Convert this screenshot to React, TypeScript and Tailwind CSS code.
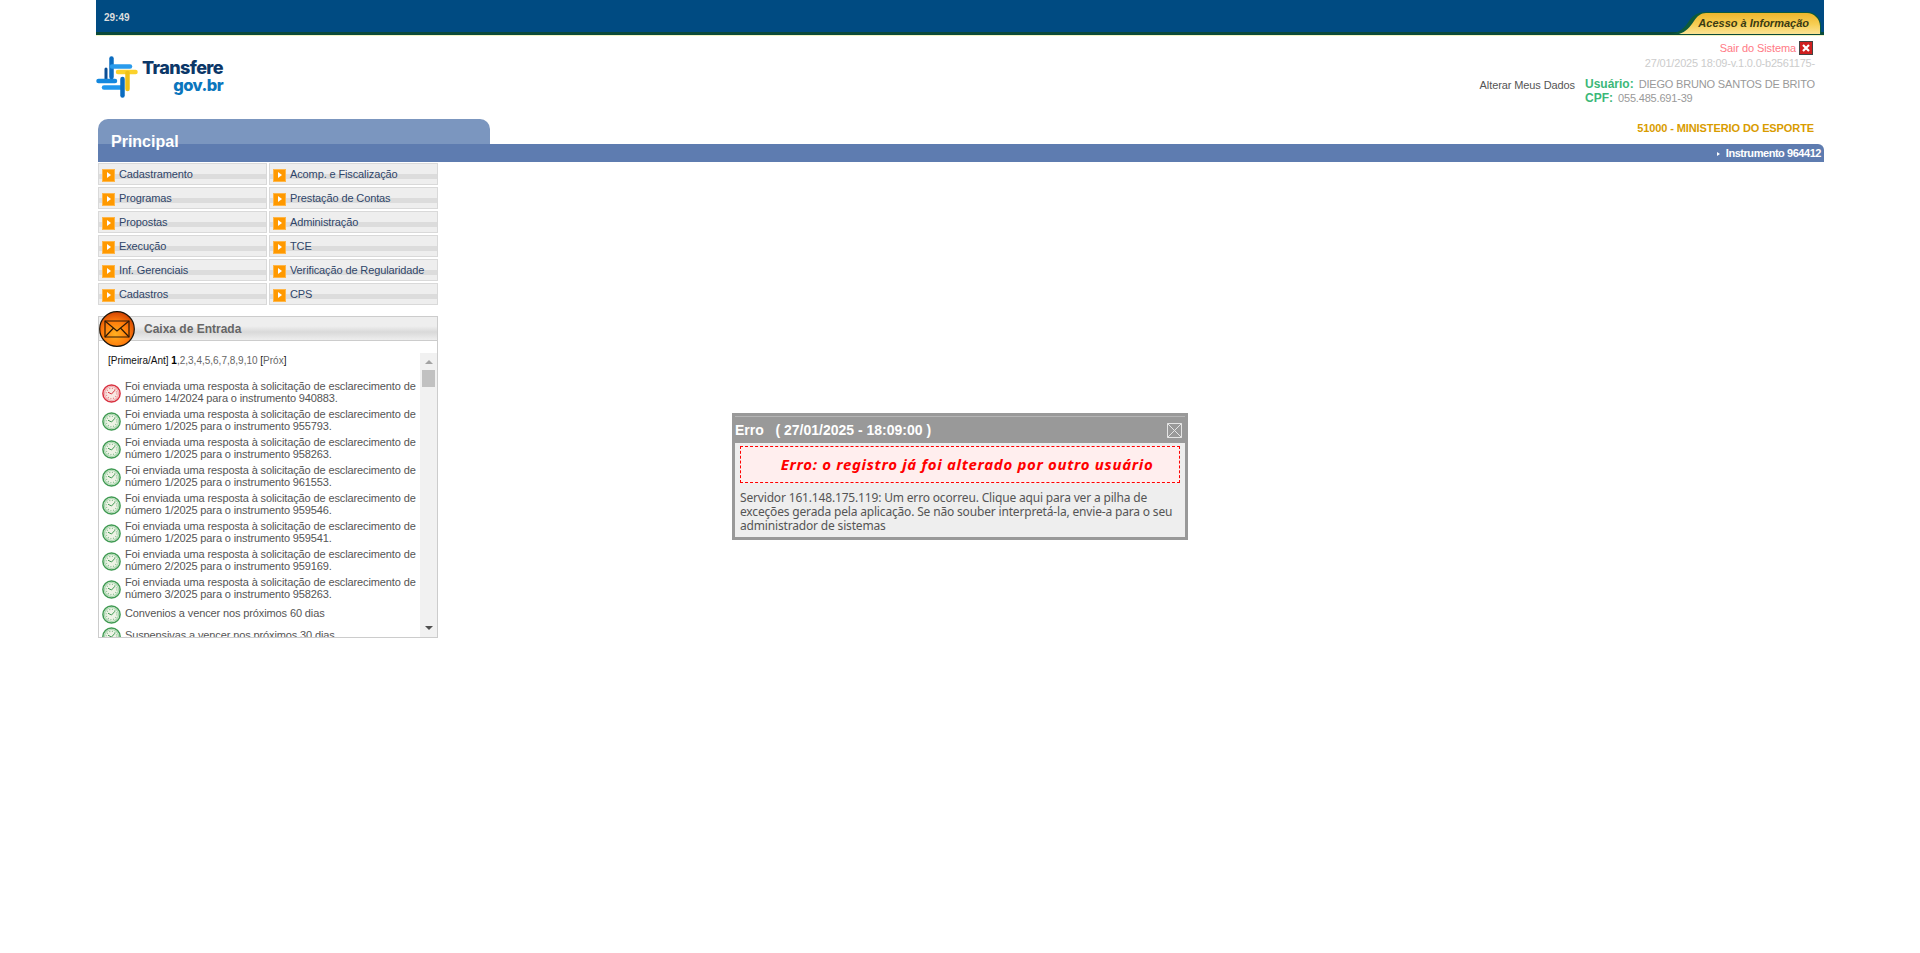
const menuItems = [
  ["Cadastramento", "Acomp. e Fiscalização"],
  ["Programas", "Prestação de Contas"],
  ["Propostas", "Administração"],
  ["Execução", "TCE"],
  ["Inf. Gerenciais", "Verificação de Regularidade"],
  ["Cadastros", "CPS"],
];

const messages = [
  { late: true, lines: ["Foi enviada uma resposta à solicitação de esclarecimento de", "número 14/2024 para o instrumento 940883."] },
  { lines: ["Foi enviada uma resposta à solicitação de esclarecimento de", "número 1/2025 para o instrumento 955793."] },
  { lines: ["Foi enviada uma resposta à solicitação de esclarecimento de", "número 1/2025 para o instrumento 958263."] },
  { lines: ["Foi enviada uma resposta à solicitação de esclarecimento de", "número 1/2025 para o instrumento 961553."] },
  { lines: ["Foi enviada uma resposta à solicitação de esclarecimento de", "número 1/2025 para o instrumento 959546."] },
  { lines: ["Foi enviada uma resposta à solicitação de esclarecimento de", "número 1/2025 para o instrumento 959541."] },
  { lines: ["Foi enviada uma resposta à solicitação de esclarecimento de", "número 2/2025 para o instrumento 959169."] },
  { lines: ["Foi enviada uma resposta à solicitação de esclarecimento de", "número 3/2025 para o instrumento 958263."] },
  { lines: ["Convenios a vencer nos próximos 60 dias"] },
  { lines: ["Suspensivas a vencer nos próximos 30 dias"] },
];

function Logo() {
  return (
    <div className="flex items-start">
      <svg width="42" height="42" viewBox="0 0 42 42" fill="none" strokeLinecap="round" strokeWidth="4.5">
        <path d="M10 13V24" stroke="#0a4f96" strokeWidth="3" />
        <path d="M2.5 25H19" stroke="#1387de" />
        <path d="M15.5 2.5V21" stroke="#0b6cc0" />
        <path d="M16 10.5H34" stroke="#2a9bec" />
        <path d="M8 31.5H25" stroke="#1f97ee" />
        <path d="M26.5 23V39.5" stroke="#0b6cc0" />
        <path d="M22 16H39.5" stroke="#fbd22c" />
        <path d="M31.5 17V33" stroke="#efc119" />
      </svg>
      <div className="ml-[4px] mt-[3px] flex flex-col items-end font-['Inter',sans-serif] font-extrabold">
        <span className="text-[18px] leading-[18px] tracking-[-0.6px] text-[#0c3768]">Transfere</span>
        <span className="text-[16.5px] leading-[16px] tracking-[-0.6px] text-[#0b76bd]">gov.br</span>
      </div>
    </div>
  );
}

function AccessTab() {
  return (
    <div className="relative mt-auto mr-[3px] -mb-[2px] flex h-[22px] w-[151px] items-center justify-end pr-[12px]">
      <svg className="absolute inset-0" width="151" height="22" viewBox="0 0 151 22">
        <defs>
          <linearGradient id="tabFill" x1="0" y1="0" x2="0" y2="1">
            <stop offset="0" stopColor="#efb52c" />
            <stop offset="0.55" stopColor="#f7cf55" />
            <stop offset="1" stopColor="#fbe395" />
          </linearGradient>
        </defs>
        <path d="M0 22C10 21 15 15 19 9C23 3 29 0 36 0H137C145 0 151 6 151 14V22Z" fill="#0d5a3c" />
        <path d="M9 22C16 20 20 15 24 9C27 4 31 1 36 1H137C144 1 150 7 150 14V22Z" fill="url(#tabFill)" />
      </svg>
      <span className="relative text-[11px] font-bold italic text-[#3a3a14]">Acesso à Informação</span>
    </div>
  );
}

function MenuCell({ label }: { label: string }) {
  return (
    <div className="flex h-[22px] w-[169px] items-center border border-[#d9d9d9] bg-[linear-gradient(#eeeeee_0,#eeeeee_50%,#dcdcdc_50%,#dcdcdc_75%,#eeeeee_75%)] pl-[3px]">
      <span className="mt-[2px] flex h-[13px] w-[13px] items-center justify-center border border-[#ffb648] bg-[#ff9900]">
        <span className="ml-[1px] h-0 w-0 border-y-[3.5px] border-l-[4px] border-y-transparent border-l-white" />
      </span>
      <span className="ml-[4px] text-[11px] tracking-[-0.12px] text-[#2f4569]">{label}</span>
    </div>
  );
}

function Envelope() {
  return (
    <svg className="absolute -top-[5px] left-[3px]" width="36" height="36" viewBox="0 0 36 36">
      <defs>
        <radialGradient id="orb" cx="45%" cy="65%" r="70%">
          <stop offset="0" stopColor="#ffb020" />
          <stop offset="0.55" stopColor="#ff7a0a" />
          <stop offset="1" stopColor="#c93a02" />
        </radialGradient>
      </defs>
      <circle cx="18" cy="18" r="17.3" fill="url(#orb)" stroke="#1e1408" strokeWidth="1.2" />
      <path d="M6 10H30V26H6Z" fill="none" stroke="#2e1a06" strokeWidth="1.2" />
      <path d="M6 10L18 20L30 10M6 26L14.5 17M30 26L21.5 17" fill="none" stroke="#2e1a06" strokeWidth="1.2" />
    </svg>
  );
}

function Clock({ late }: { late?: boolean }) {
  const ring = late ? "#d8303f" : "#3f9a52";
  const tint = late ? "#efa9ae" : "#a8d5ae";
  const face = late ? "#f8e8e2" : "#eef3e6";
  return (
    <svg width="19" height="19" viewBox="0 0 19 19" className="shrink-0">
      <circle cx="9.5" cy="9.5" r="8.6" fill={face} stroke={ring} strokeWidth="1.5" />
      <circle cx="9.5" cy="9.5" r="7" fill="none" stroke={tint} strokeWidth="1.2" />
      <circle cx="9.5" cy="9.5" r="5.2" fill="none" stroke={ring} strokeOpacity="0.6" strokeWidth="1.2" strokeDasharray="1 1.7" />
      <path d="M9.5 10L6 8.2M9.5 10L13 6.2" stroke={ring} strokeWidth="1" fill="none" />
    </svg>
  );
}

function Inbox() {
  return (
    <div className="mt-[11px] ml-[2px] flex h-[322px] w-[340px] flex-col overflow-hidden border border-[#cccccc] bg-white">
      <div className="flex h-[24px] shrink-0 items-center border-b border-[#cccccc] bg-[linear-gradient(#eeeeee_0,#eeeeee_40%,#d9d9d9_65%,#eeeeee_100%)] pl-[45px]">
        <span className="text-[12px] font-bold text-[#666666]">Caixa de Entrada</span>
      </div>
      <div className="flex min-h-0 flex-1 pt-[12px]">
        <div className="min-w-0 flex-1 overflow-hidden">
          <p className="mt-[2px] pl-[9px] text-[10px] leading-[12px] text-[#666666]">
            <span className="text-[#111111]">[Primeira/Ant]</span> <b className="text-black">1</b>,2,3,4,5,6,7,8,9,10 <span className="text-[#111111]">[</span>Próx<span className="text-[#111111]">]</span>
          </p>
          <ul className="mt-[12px] flex flex-col">
            {messages.map((m, i) => (
              <li key={i} className={`flex shrink-0 items-center pl-[3px] ${m.lines.length > 1 ? "h-[28px]" : "h-[22px]"}`}>
                <Clock late={m.late} />
                <span className="ml-[4px] -mt-[2px] whitespace-nowrap text-[11px] leading-[12px] tracking-[-0.12px] text-[#555555]">
                  {m.lines.map((l) => (
                    <span key={l} className="block">{l}</span>
                  ))}
                </span>
              </li>
            ))}
          </ul>
        </div>
        <div className="flex w-[17px] shrink-0 flex-col items-center bg-[#f1f1f1]">
          <span className="mt-[7px] h-0 w-0 border-x-[4px] border-b-[4px] border-x-transparent border-b-[#a3a3a3]" />
          <span className="mt-[6px] h-[17px] w-[13px] bg-[#c1c1c1]" />
          <span className="mt-auto mb-[7px] h-0 w-0 border-x-[4px] border-t-[4px] border-x-transparent border-t-[#505050]" />
        </div>
      </div>
    </div>
  );
}

function ErrorDialog() {
  return (
    <div className="absolute left-[732px] top-[413px] h-[127px] w-[456px] border-[3px] border-[#999999] bg-[#eeeeee]">
      <div className="flex h-[27px] items-center justify-between border-t border-[#b5b5b5] bg-[#999999] text-white">
        <span className="whitespace-pre text-[14px] font-bold">Erro   ( 27/01/2025 - 18:09:00 )</span>
        <svg width="15" height="15" viewBox="0 0 15 15" fill="none" stroke="#e4e4e4" className="mr-[3px]">
          <path d="M.5.5H14.5V14.5H.5ZM.5.5L14.5 14.5M14.5.5L.5 14.5" />
        </svg>
      </div>
      <div className="px-[5px] pt-[3px] font-['Noto_Sans',sans-serif]">
        <div className="flex h-[37px] items-center justify-center border border-dashed border-[#ff0000] bg-[#ffeeee] pl-[14px] text-[15px] font-bold italic tracking-[0.68px] text-[#ff0000]">
          Erro: o registro já foi alterado por outro usuário
        </div>
        <p className="mt-[8px] text-[12px] leading-[14px] tracking-[-0.17px] text-[#555555]">
          Servidor 161.148.175.119: Um erro ocorreu. Clique aqui para ver a pilha de exceções gerada pela aplicação. Se não souber interpretá-la, envie-a para o seu administrador de sistemas
        </p>
      </div>
    </div>
  );
}

export default function App() {
  return (
    <div className="relative min-h-[953px] bg-white font-['Liberation_Sans',Arial,sans-serif]">
      <div className="mx-auto w-[1728px]">
        <div className="flex h-[35px] items-center justify-between border-b-[3px] border-b-[#0b4a3a] bg-[#004b82] pl-[8px] shadow-[0_1px_0_#f2f5c4]">
          <span className="mt-[3px] text-[10px] font-bold text-[#dddddd]">29:49</span>
          <AccessTab />
        </div>

        <div className="flex h-[84px] justify-between">
          <div className="pt-[21px]"><Logo /></div>
          <div className="flex flex-col items-end pr-[11px] pt-[5px]">
            <div className="flex items-center text-[11px] tracking-[-0.1px] text-[#ff7a85]">
              Sair do Sistema
              <svg width="14" height="14" viewBox="0 0 14 14" className="ml-[3px]">
                <rect x=".5" y=".5" width="13" height="13" fill="#cf1f1f" stroke="#444444" />
                <path d="M4 4L10 10M10 4L4 10" stroke="#ffffff" strokeWidth="2.2" />
              </svg>
            </div>
            <div className="-mt-[2px] -mr-[2px] text-[11px] tracking-[-0.2px] text-[#cccccc]">27/01/2025 18:09-v.1.0.0-b2561175-</div>
            <div className="mt-[6px] -mr-[1px] flex">
              <span className="mr-[10px] text-[11px] tracking-[-0.1px] text-[#555555]">Alterar Meus Dados</span>
              <div className="w-[229px] whitespace-nowrap text-[11px] leading-[14px] tracking-[-0.18px] text-[#999999]">
                <div><b className="mr-[5px] text-[12px] tracking-normal text-[#3cb878]">Usuário:</b>DIEGO BRUNO SANTOS DE BRITO</div>
                <div><b className="mr-[5px] text-[12px] tracking-normal text-[#3cb878]">CPF:</b>055.485.691-39</div>
              </div>
            </div>
          </div>
        </div>

        <div className="relative ml-[2px]">
          <div className="flex items-end justify-between">
            <div className="h-[25px] w-[392px] rounded-t-[10px] bg-[#7b96bf]" />
            <span className="mb-[8px] pr-[10px] text-[11px] font-bold tracking-[-0.1px] text-[#d99c00]">51000 - MINISTERIO DO ESPORTE</span>
          </div>
          <div className="flex h-[18px] items-center justify-end rounded-tr-[6px] bg-[#5e7cb0] pt-[1px] pr-[3px] text-[11px] font-bold tracking-[-0.45px] text-white">
            <span className="mr-[6px] h-0 w-0 border-y-[2.5px] border-l-[3px] border-y-transparent border-l-white" />
            Instrumento 964412
          </div>
          <span className="absolute left-[13px] top-[13px] text-[16px] font-bold leading-[20px] text-white">Principal</span>
        </div>

        <div className="ml-[2px] mt-[1px] grid w-[340px] grid-cols-2 gap-[2px]">
          {menuItems.flat().map((label) => (
            <MenuCell key={label} label={label} />
          ))}
        </div>

        <div className="relative">
          <Inbox />
          <Envelope />
        </div>
      </div>
      <ErrorDialog />
    </div>
  );
}
